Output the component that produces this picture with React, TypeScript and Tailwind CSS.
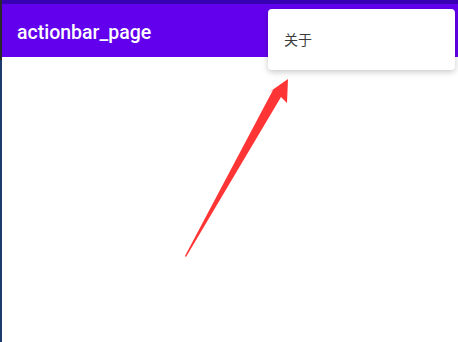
export default function App() {
  return (
    <div className="relative flex h-[342px] w-[458px] overflow-hidden bg-white font-['Roboto','Noto_Sans_CJK_SC',sans-serif]">
      {/* window edge */}
      <div className="flex w-[2px] flex-col">
        <div className="h-[60px] bg-[#2b2b2b]" />
        <div className="flex-1 bg-[#1d3a6b]" />
      </div>

      <div className="flex flex-1 flex-col">
        <div className="h-[4px] bg-[#3700b3]" />
        <div className="flex h-[53px] items-center bg-[#6200ee] pl-[15px] pt-[5px] shadow-[0_2px_3px_rgba(0,0,0,0.18)]">
          <span className="text-[19.5px] font-medium text-white">actionbar_page</span>
        </div>
        <div className="flex-1 bg-white" />
      </div>

      {/* overflow menu */}
      <div className="absolute left-[268px] top-[9px] flex h-[61px] w-[187px] items-center rounded-[4px] bg-white pl-[16px] pt-[2px] shadow-[0_2px_6px_rgba(0,0,0,0.22)]">
        <span className="text-[14px] text-[#3c3c3c]">关于</span>
      </div>

      {/* red annotation arrow */}
      <svg className="absolute left-0 top-0" width="458" height="342" viewBox="0 0 458 342">
        <polygon
          points="288,79 287,103 281,97 186,257 185,256 273,90 268,93"
          fill="#ff3535"
        />
      </svg>
    </div>
  );
}
